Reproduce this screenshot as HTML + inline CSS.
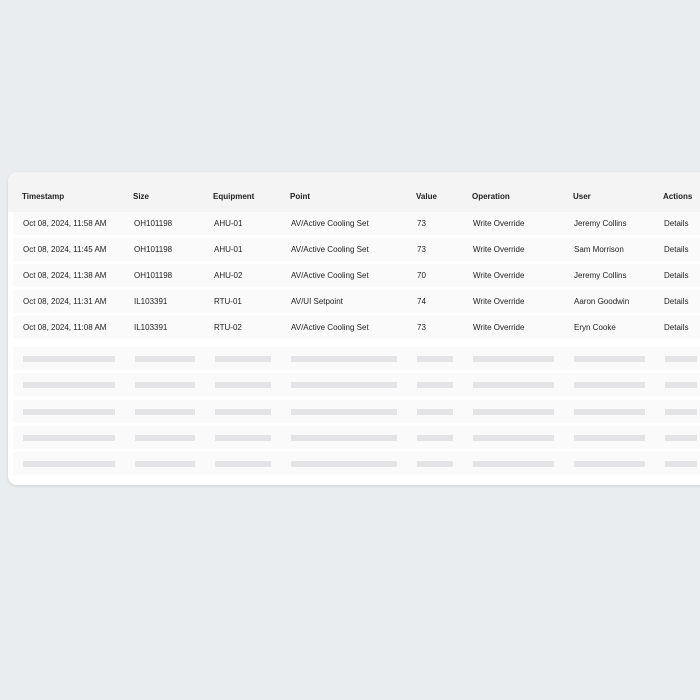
<!DOCTYPE html>
<html><head><style>
body{margin:0;width:700px;height:700px;background:#e9edf0;font-family:"Liberation Sans",sans-serif;position:relative;overflow:hidden}
.card{position:absolute;left:8px;top:172px;width:720px;height:313px;background:#fff;border-radius:9px;box-shadow:0 1px 3px rgba(0,0,0,.12);overflow:hidden}
.hdr{position:absolute;left:0;top:0;right:0;height:40px;background:#f4f4f4}
.row{position:absolute;left:5px;right:0;height:23px;background:#fafafa}
.t{position:absolute;font-size:8px;color:#222;white-space:nowrap}
.h{font-weight:bold;font-size:8px;color:#222}
.bar{position:absolute;height:6px;background:#e4e4e6}
</style></head><body>
<div class="card">
<div class="hdr"></div>
</div>
<div id="c"></div>
<script>
var cols=[22,133,213,290,416,472,573,663];
var heads=["Timestamp","Size","Equipment","Point","Value","Operation","User","Actions"];
var data=[
["Oct 08, 2024, 11:58 AM","OH101198","AHU-01","AV/Active Cooling Set","73","Write Override","Jeremy Collins","Details"],
["Oct 08, 2024, 11:45 AM","OH101198","AHU-01","AV/Active Cooling Set","73","Write Override","Sam Morrison","Details"],
["Oct 08, 2024, 11:38 AM","OH101198","AHU-02","AV/Active Cooling Set","70","Write Override","Jeremy Collins","Details"],
["Oct 08, 2024, 11:31 AM","IL103391","RTU-01","AV/UI Setpoint","74","Write Override","Aaron Goodwin","Details"],
["Oct 08, 2024, 11:08 AM","IL103391","RTU-02","AV/Active Cooling Set","73","Write Override","Eryn Cooke","Details"]];
var bars=[[23,115],[135,195],[215,271],[291,397],[417,453],[473,554],[574,645],[665,697]];
var h='';
heads.forEach(function(s,i){h+='<div class="t h" style="left:'+cols[i]+'px;top:192px">'+s+'</div>';});
data.forEach(function(r,j){var y=224+26*j;
h+='<div class="row" style="top:'+(y-12)+'px;left:13px"></div>';
r.forEach(function(s,i){h+='<div class="t" style="left:'+(cols[i]+1)+'px;top:'+(y-5)+'px">'+s+'</div>';});});
for(var j=0;j<5;j++){var y=359+26.3*j;
h+='<div class="row" style="top:'+(y-12)+'px;left:13px"></div>';
bars.forEach(function(b){h+='<div class="bar" style="left:'+b[0]+'px;width:'+(b[1]-b[0])+'px;top:'+(y-3)+'px"></div>';});}
document.getElementById('c').innerHTML=h;
</script>
</body></html>
